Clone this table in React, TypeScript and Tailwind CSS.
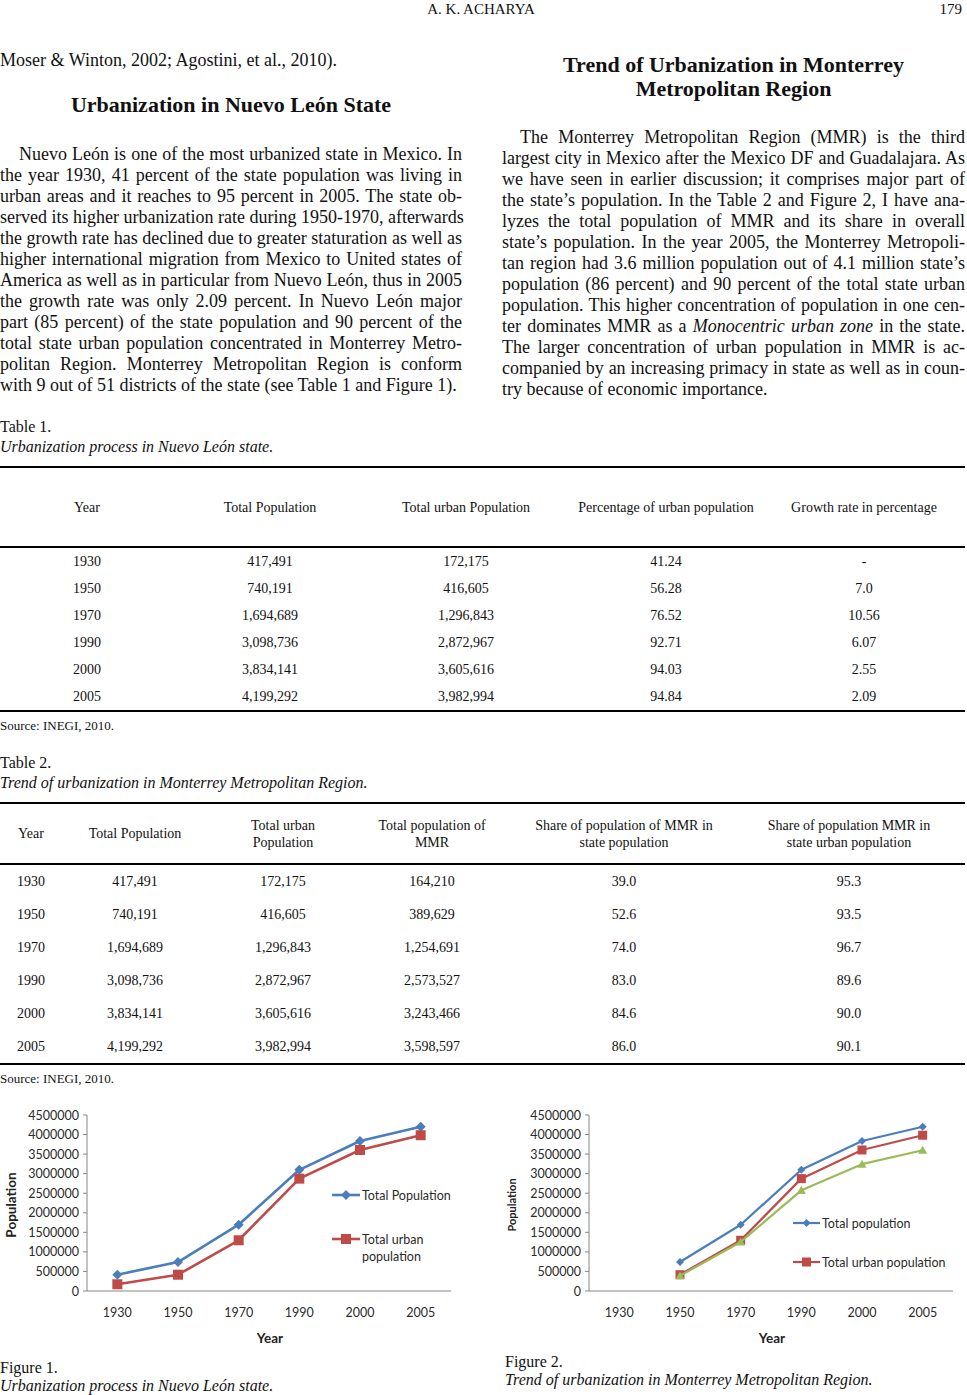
import React from "react";

const YEARS = ["1930", "1950", "1970", "1990", "2000", "2005"];
const TOTAL = [417491, 740191, 1694689, 3098736, 3834141, 4199292];
const URBAN = [172175, 416605, 1296843, 2872967, 3605616, 3982994];
const MMR = [164210, 389629, 1254691, 2573527, 3243466, 3598597];

const BLUE = "#4a7ebb";
const RED = "#be4b48";
const GREEN = "#9bbb59";

const LEFT_LINES: React.ReactNode[] = [
  "Nuevo León is one of the most urbanized state in Mexico. In",
  "the year 1930, 41 percent of the state population was living in",
  "urban areas and it reaches to 95 percent in 2005. The state ob-",
  "served its higher urbanization rate during 1950-1970, afterwards",
  "the growth rate has declined due to greater staturation as well as",
  "higher international migration from Mexico to United states of",
  "America as well as in particular from Nuevo León, thus in 2005",
  "the growth rate was only 2.09 percent. In Nuevo León major",
  "part (85 percent) of the state population and 90 percent of the",
  "total state urban population concentrated in Monterrey Metro-",
  "politan Region. Monterrey Metropolitan Region is conform",
  "with 9 out of 51 districts of the state (see Table 1 and Figure 1).",
];

const RIGHT_LINES: React.ReactNode[] = [
  "The Monterrey Metropolitan Region (MMR) is the third",
  "largest city in Mexico after the Mexico DF and Guadalajara. As",
  "we have seen in earlier discussion; it comprises major part of",
  "the state’s population. In the Table 2 and Figure 2, I have ana-",
  "lyzes the total population of MMR and its share in overall",
  "state’s population. In the year 2005, the Monterrey Metropoli-",
  "tan region had 3.6 million population out of 4.1 million state’s",
  "population (86 percent) and 90 percent of the total state urban",
  "population. This higher concentration of population in one cen-",
  <>
    ter dominates MMR as a <i>Monocentric urban zone</i> in the state.
  </>,
  "The larger concentration of urban population in MMR is ac-",
  "companied by an increasing primacy in state as well as in coun-",
  "try because of economic importance.",
];

function Paragraph({ lines, indent }: { lines: React.ReactNode[]; indent: string }) {
  return (
    <div className="text-[18px] leading-[21px]">
      {lines.map((line, i) => {
        const last = i === lines.length - 1;
        return (
          <div
            key={i}
            className={`whitespace-nowrap ${i === 0 ? indent : ""} ${
              last ? "text-left" : "text-justify [text-align-last:justify]"
            }`}
          >
            {line}
          </div>
        );
      })}
    </div>
  );
}

const T1_COLS = "grid grid-cols-[174px_192px_200px_200px_196px]";
const T2_COLS = "grid grid-cols-[62px_146px_150px_148px_236px_214px]";

function Rule() {
  return <div className="h-[2px] w-[965px] bg-black" />;
}

function Table1() {
  const rows = YEARS.map((y, i) => [
    y,
    TOTAL[i].toLocaleString("en-US"),
    URBAN[i].toLocaleString("en-US"),
    ["41.24", "56.28", "76.52", "92.71", "94.03", "94.84"][i],
    ["-", "7.0", "10.56", "6.07", "2.55", "2.09"][i],
  ]);
  return (
    <div className="text-[14px]">
      <Rule />
      <div className={`${T1_COLS} h-[78px] items-center text-center`}>
        <div>Year</div>
        <div>Total Population</div>
        <div>Total urban Population</div>
        <div>Percentage of urban population</div>
        <div>Growth rate in percentage</div>
      </div>
      <Rule />
      {rows.map((r) => (
        <div key={r[0]} className={`${T1_COLS} h-[27px] items-center text-center`}>
          {r.map((c, j) => (
            <div key={j}>{c}</div>
          ))}
        </div>
      ))}
      <Rule />
    </div>
  );
}

function Table2() {
  const rows = YEARS.map((y, i) => [
    y,
    TOTAL[i].toLocaleString("en-US"),
    URBAN[i].toLocaleString("en-US"),
    MMR[i].toLocaleString("en-US"),
    ["39.0", "52.6", "74.0", "83.0", "84.6", "86.0"][i],
    ["95.3", "93.5", "96.7", "89.6", "90.0", "90.1"][i],
  ]);
  return (
    <div className="text-[14px]">
      <Rule />
      <div className={`${T2_COLS} h-[59px] items-center text-center leading-[17px]`}>
        <div>Year</div>
        <div>Total Population</div>
        <div>
          Total urban
          <br />
          Population
        </div>
        <div>
          Total population of
          <br />
          MMR
        </div>
        <div>
          Share of population of MMR in
          <br />
          state population
        </div>
        <div>
          Share of population MMR in
          <br />
          state urban population
        </div>
      </div>
      <Rule />
      {rows.map((r) => (
        <div key={r[0]} className={`${T2_COLS} h-[33px] items-center text-center`}>
          {r.map((c, j) => (
            <div key={j}>{c}</div>
          ))}
        </div>
      ))}
      <Rule />
    </div>
  );
}

type Kind = "diamond" | "square" | "triangle";

function Marker({ kind, x, y, color, s }: { kind: Kind; x: number; y: number; color: string; s: number }) {
  if (kind === "diamond")
    return <polygon points={`${x},${y - s} ${x + s},${y} ${x},${y + s} ${x - s},${y}`} fill={color} />;
  if (kind === "square") return <rect x={x - s} y={y - s} width={s * 2} height={s * 2} fill={color} />;
  return <polygon points={`${x},${y - s} ${x + s},${y + s * 0.8} ${x - s},${y + s * 0.8}`} fill={color} />;
}

type Series = { data: (number | null)[]; color: string; kind: Kind; s: number };
type Legend = { y: number; color: string; kind: Kind; s: number; x1: number; x2: number; lines: string[] };

const AX = 87;
const AR = 451;
const TOP = 15;
const BOT = 191;
const catX = (i: number) => AX + ((AR - AX) / 6) * (i + 0.5);
const valY = (v: number) => BOT - (v / 4500000) * (BOT - TOP);

function Chart({
  series,
  legends,
  popX,
  popSize,
  stroke,
}: {
  series: Series[];
  legends: Legend[];
  popX: number;
  popSize: number;
  stroke: number;
}) {
  const ticks = [0, 500000, 1000000, 1500000, 2000000, 2500000, 3000000, 3500000, 4000000, 4500000];
  return (
    <svg width="460" height="250" viewBox="0 0 460 250" className="block" style={{ fontFamily: "Lato, 'Open Sans', sans-serif" }}>
      <line x1={AX} y1={TOP} x2={AX} y2={BOT} stroke="#868686" strokeWidth="1" />
      <line x1={AX} y1={BOT} x2={AR} y2={BOT} stroke="#868686" strokeWidth="1" />
      {ticks.map((t) => (
        <g key={t}>
          <line x1={AX - 4} y1={valY(t)} x2={AX} y2={valY(t)} stroke="#868686" />
          <text x={79} y={valY(t) + 4.5} fontSize="12.5" textAnchor="end" fill="#2a2a2a">
            {t}
          </text>
        </g>
      ))}
      {YEARS.map((y, i) => (
        <text key={y} x={catX(i)} y={217} fontSize="12.5" textAnchor="middle" fill="#2a2a2a">
          {y}
        </text>
      ))}
      <text x={270} y={243} fontSize="13.5" fontWeight="700" textAnchor="middle" fill="#222">
        Year
      </text>
      <text
        x={popX}
        y={105}
        fontSize={popSize}
        fontWeight="700"
        textAnchor="middle"
        dominantBaseline="central"
        transform={`rotate(-90 ${popX} 105)`}
        fill="#222"
      >
        Population
      </text>
      {series.map((s, si) => {
        const pts = s.data
          .map((v, i) => (v == null ? null : `${catX(i)},${valY(v)}`))
          .filter(Boolean)
          .join(" ");
        return (
          <g key={si}>
            <polyline points={pts} fill="none" stroke={s.color} strokeWidth={stroke} strokeLinejoin="round" />
            {s.data.map((v, i) =>
              v == null ? null : <Marker key={i} kind={s.kind} x={catX(i)} y={valY(v)} color={s.color} s={s.s} />
            )}
          </g>
        );
      })}
      {legends.map((l, li) => (
        <g key={li}>
          <line x1={l.x1} y1={l.y} x2={l.x2} y2={l.y} stroke={l.color} strokeWidth={stroke} />
          <Marker kind={l.kind} x={(l.x1 + l.x2) / 2} y={l.y} color={l.color} s={l.s} />
          {l.lines.map((t, ti) => (
            <text key={ti} x={l.x2 + 2} y={l.y + 4.5 + ti * 17} fontSize="12.5" fill="#2a2a2a">
              {t}
            </text>
          ))}
        </g>
      ))}
    </svg>
  );
}

export default function App() {
  return (
    <div className="w-[967px] min-h-[1395px] bg-white text-[#111] font-['Liberation_Serif',serif]">
      <div className="flex h-[18px] items-center text-[15px] leading-[18px]">
        <div className="flex-1" />
        <div>A. K. ACHARYA</div>
        <div className="flex flex-1 justify-end pr-[5px]">179</div>
      </div>

      <div className="mt-[32px] grid grid-cols-[462px_463px] gap-x-[40px]">
        <div>
          <p className="text-[18px] leading-[21px]">Moser &amp; Winton, 2002; Agostini, et al., 2010).</p>
          <h2 className="mt-[22px] text-center text-[22px] font-bold leading-[24px]">
            Urbanization in Nuevo León State
          </h2>
          <div className="mt-[27px]">
            <Paragraph lines={LEFT_LINES} indent="pl-[19px]" />
          </div>
        </div>
        <div>
          <h2 className="mt-[3px] text-center text-[22px] font-bold leading-[24px]">
            Trend of Urbanization in Monterrey
            <br />
            Metropolitan Region
          </h2>
          <div className="mt-[26px]">
            <Paragraph lines={RIGHT_LINES} indent="pl-[18px]" />
          </div>
        </div>
      </div>

      <div className="mt-[17px] text-[16px] leading-[20px]">
        <div>Table 1.</div>
        <div className="italic">Urbanization process in Nuevo León state.</div>
      </div>
      <div className="mt-[9px]">
        <Table1 />
      </div>
      <div className="mt-[6px] text-[13px] leading-[16px]">Source: INEGI, 2010.</div>

      <div className="mt-[19px] text-[16px] leading-[20px]">
        <div>Table 2.</div>
        <div className="italic">Trend of urbanization in Monterrey Metropolitan Region.</div>
      </div>
      <div className="mt-[9px]">
        <Table2 />
      </div>
      <div className="mt-[6px] text-[13px] leading-[16px]">Source: INEGI, 2010.</div>

      <div className="mt-[13px] grid grid-cols-[462px_463px] gap-x-[40px]">
        <div>
          <Chart
            series={[
              { data: TOTAL, color: BLUE, kind: "diamond", s: 5 },
              { data: URBAN, color: RED, kind: "square", s: 5 },
            ]}
            legends={[
              { y: 95, color: BLUE, kind: "diamond", s: 5, x1: 332, x2: 360, lines: ["Total Population"] },
              { y: 139, color: RED, kind: "square", s: 5, x1: 332, x2: 360, lines: ["Total urban", "population"] },
            ]}
            popX={11}
            popSize={13.5}
            stroke={2.6}
          />
          <div className="mt-[9px] text-[16px] leading-[18px]">
            <div>Figure 1.</div>
            <div className="italic">Urbanization process in Nuevo León state.</div>
          </div>
        </div>
        <div>
          <Chart
            series={[
              { data: [null, ...TOTAL.slice(1)], color: BLUE, kind: "diamond", s: 4 },
              { data: [null, ...URBAN.slice(1)], color: RED, kind: "square", s: 4.5 },
              { data: [null, ...MMR.slice(1)], color: GREEN, kind: "triangle", s: 4.5 },
            ]}
            legends={[
              { y: 123, color: BLUE, kind: "diamond", s: 4, x1: 291, x2: 318, lines: ["Total population"] },
              { y: 162, color: RED, kind: "square", s: 4.5, x1: 291, x2: 318, lines: ["Total urban population"] },
            ]}
            popX={9}
            popSize={11}
            stroke={2.2}
          />
          <div className="ml-[3px] mt-[3px] text-[16px] leading-[18px]">
            <div>Figure 2.</div>
            <div className="italic">Trend of urbanization in Monterrey Metropolitan Region.</div>
          </div>
        </div>
      </div>
    </div>
  );
}
